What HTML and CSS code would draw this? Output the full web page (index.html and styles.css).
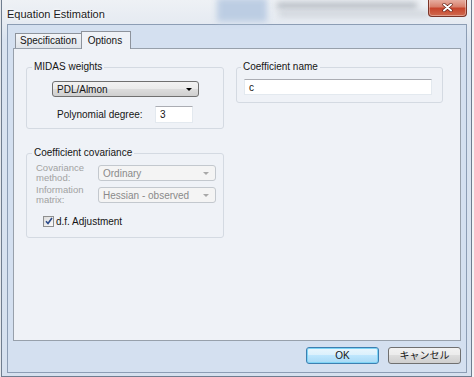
FILE: index.html
```html
<!DOCTYPE html>
<html lang="ja">

<head>
    <meta charset="UTF-8">
    <meta name="viewport" content="width=device-width, initial-scale=1.0">
    <title>Equation Estimation</title>
    <link rel="stylesheet" href="styles.css">
</head>

<body>
    <!-- 对话框窗口 -->
    <div class="window">
        <!-- 标题栏（玻璃效果，后面透出模糊的桌面） -->
        <div class="titlebar">
            <div class="blur blur-block"></div>
            <div class="blur blur-line1"></div>
            <div class="blur blur-line2"></div>
            <span class="title">Equation Estimation</span>
            <div class="close">
                <svg width="11" height="9" viewBox="0 0 11 9">
                    <path d="M2 1.5 L9 7.5 M9 1.5 L2 7.5" stroke="#5a1a10" stroke-width="3.2" stroke-linecap="round" />
                    <path d="M2 1.5 L9 7.5 M9 1.5 L2 7.5" stroke="#ffffff" stroke-width="2" stroke-linecap="round" />
                </svg>
            </div>
        </div>
        <!-- 客户区 -->
        <div class="client">
            <!-- 选项卡 -->
            <div class="tabs">
                <div class="tab">Specification</div>
                <div class="tab tab-active">Options</div>
            </div>
            <!-- 选项卡页面 -->
            <div class="panel">
                <div class="col-left">
                    <fieldset class="group group-midas">
                        <legend>MIDAS weights</legend>
                        <div class="combo combo-pdl">PDL/Almon<i class="arrow"></i></div>
                        <div class="row-degree">
                            <span class="lbl-degree">Polynomial degree:</span>
                            <div class="edit edit-degree">3</div>
                        </div>
                    </fieldset>
                    <fieldset class="group group-cov">
                        <legend>Coefficient covariance</legend>
                        <div class="row-cov">
                            <span class="lbl-dis">Covariance<br>method:</span>
                            <div class="combo combo-dis">Ordinary<i class="arrow"></i></div>
                        </div>
                        <div class="row-cov row-info">
                            <span class="lbl-dis">Information<br>matrix:</span>
                            <div class="combo combo-dis">Hessian - observed<i class="arrow"></i></div>
                        </div>
                        <div class="row-check">
                            <span class="check">
                                <svg width="8" height="8" viewBox="0 0 8 8">
                                    <path d="M1 4.2 L3 6.5 L7 1" fill="none" stroke="#2b4a8a" stroke-width="1.6" />
                                </svg>
                            </span>
                            <span>d.f. Adjustment</span>
                        </div>
                    </fieldset>
                </div>
                <div class="col-right">
                    <fieldset class="group group-coef">
                        <legend>Coefficient name</legend>
                        <div class="edit edit-coef">c</div>
                    </fieldset>
                </div>
            </div>
            <!-- 底部按钮 -->
            <div class="buttons">
                <div class="btn btn-default">OK</div>
                <div class="btn">キャンセル</div>
            </div>
        </div>
    </div>
</body>

</html>
```

FILE: styles.css
```css
* {
    margin: 0;
    padding: 0;
    box-sizing: border-box;
}

body {
    width: 474px;
    height: 377px;
    overflow: hidden;
    /* 窗口后面的桌面 */
    background: linear-gradient(90deg, #e4e7eb, #f3f4f6);
    font-family: "Liberation Sans", "Noto Sans CJK JP", sans-serif;
    font-size: 10px;
    color: #151515;
}
/* 窗口外框 */

.window {
    margin-left: 1px;
    width: 471px;
    height: 377px;
    padding: 0 4px 3px 5px;
    border: 1px solid #6f7d8f;
    border-top: none;
    background: linear-gradient(#eef1f5 0, #e6ebf2 22px, #d9e3f0 40px, #d6e1ef 100%);
}
/* 标题栏 */

.titlebar {
    position: relative;
    height: 24px;
    padding-top: 3px;
    line-height: 22px;
}

.title {
    position: relative;
    font-size: 11px;
    color: #1b1b1b;
    text-shadow: 0 0 5px #fff, 0 0 3px #fff;
}
/* 模糊的背景 */

.blur {
    position: absolute;
    filter: blur(3px);
}

.blur-block {
    left: 210px;
    top: -2px;
    width: 50px;
    height: 24px;
    background: #bccde3;
}

.blur-line1 {
    left: 270px;
    top: 3px;
    width: 140px;
    height: 5px;
    background: #a9b0b8;
}

.blur-line2 {
    left: 272px;
    top: 12px;
    width: 150px;
    height: 4px;
    background: #c4c9cf;
}
/* 关闭按钮 */

.close {
    position: absolute;
    right: 0;
    top: -1px;
    width: 39px;
    height: 18px;
    display: flex;
    align-items: center;
    justify-content: center;
    border: 1px solid #7b3428;
    border-top: none;
    border-radius: 0 0 4px 4px;
    background: linear-gradient(#e9b4a8 0, #d8806c 45%, #c7452d 55%, #cf6a4f 100%);
    box-shadow: inset 0 0 0 1px rgba(255, 255, 255, 0.35);
}
/* 客户区 */

.client {
    height: 349px;
    padding: 6px 5px 0 5px;
    border: 1px solid #8c9db4;
    background: #d4e0f0;
}
/* 选项卡 */

.tabs {
    display: flex;
    height: 17px;
    padding-left: 2px;
}

.tab {
    position: relative;
    height: 15px;
    margin-top: 2px;
    padding: 0 4px;
    line-height: 14px;
    border: 1px solid #8d939c;
    border-bottom: none;
    background: linear-gradient(#f3f5f8, #dfe4ea);
}

.tab-active {
    z-index: 1;
    height: 18px;
    margin-top: 0;
    margin-left: -1px;
    padding: 0 8px 0 6px;
    line-height: 17px;
    background: #eff2f7;
}
/* 选项卡页面 */

.panel {
    display: flex;
    gap: 12px;
    height: 293px;
    padding: 12px 0 0 12px;
    border: 1px solid #97a0ab;
    background: #eff2f7;
}

.col-left {
    width: 198px;
}

.col-right {
    width: 207px;
}
/* 分组框 */

.group {
    min-width: 0;
    padding: 0 6px 0 5px;
    border: 1px solid #d4dae2;
    border-radius: 3px;
}

.group legend {
    padding: 0 2px;
    line-height: 12px;
}

.group-midas {
    padding-bottom: 5px;
}

.group-cov {
    margin-top: 18px;
    padding-bottom: 11px;
}

.group-coef {
    padding: 0 10px 7px 4px;
}
/* 下拉框 */

.combo {
    position: relative;
    height: 16px;
    padding-left: 4px;
    line-height: 15px;
    border: 1px solid #707070;
    border-radius: 3px;
    background: linear-gradient(#f2f2f2 0, #ebebeb 50%, #dddddd 50%, #cfcfcf 100%);
}

.arrow {
    position: absolute;
    right: 6px;
    top: 6px;
    border-left: 3px solid transparent;
    border-right: 3px solid transparent;
    border-top: 3px solid #000;
}

.combo-pdl {
    width: 147px;
    margin: 8px 0 0 20px;
}

.combo-dis {
    width: 118px;
    color: #8a8a8a;
    border-color: #c3c8ce;
    background: #f4f4f4;
}

.combo-dis .arrow {
    border-top-color: #a8a8a8;
}
/* 文本框 */

.edit {
    height: 17px;
    padding-left: 4px;
    line-height: 16px;
    border: 1px solid #e3e9ef;
    border-top-color: #abadb3;
    background: #fff;
}

.row-degree {
    display: flex;
    align-items: center;
    margin: 9px 0 0 25px;
}

.lbl-degree {
    width: 98px;
}

.edit-degree {
    width: 38px;
}

.edit-coef {
    width: 188px;
    height: 16px;
    margin: 6px 0 0 3px;
}
/* 协方差行 */

.row-cov {
    display: flex;
    align-items: center;
    height: 20px;
    margin: 4px 0 0 4px;
}

.row-info {
    margin-top: 2px;
}

.lbl-dis {
    width: 62px;
    font-size: 9.5px;
    line-height: 10px;
    color: #a2a2a2;
}
/* 复选框 */

.row-check {
    display: flex;
    align-items: center;
    gap: 2px;
    height: 10px;
    margin: 11px 0 0 11px;
}

.check {
    display: flex;
    align-items: center;
    justify-content: center;
    width: 11px;
    height: 11px;
    border: 1px solid #8e8f8f;
    background: linear-gradient(135deg, #dcdcdc, #fbfbfb);
}
/* 按钮 */

.buttons {
    display: flex;
    justify-content: flex-end;
    gap: 9px;
    margin-top: 6px;
}

.btn {
    width: 73px;
    height: 17px;
    line-height: 15px;
    text-align: center;
    border: 1px solid #707070;
    border-radius: 3px;
    background: linear-gradient(#f2f2f2 0, #ebebeb 50%, #dddddd 50%, #cfcfcf 100%);
}

.btn-default {
    border-color: #3c7fb1;
    background: linear-gradient(#eaf6fd 0, #d9f0fc 50%, #bee6fd 50%, #a7d9f5 100%);
    box-shadow: inset 0 0 0 1px #7fd4f5;
}
```
